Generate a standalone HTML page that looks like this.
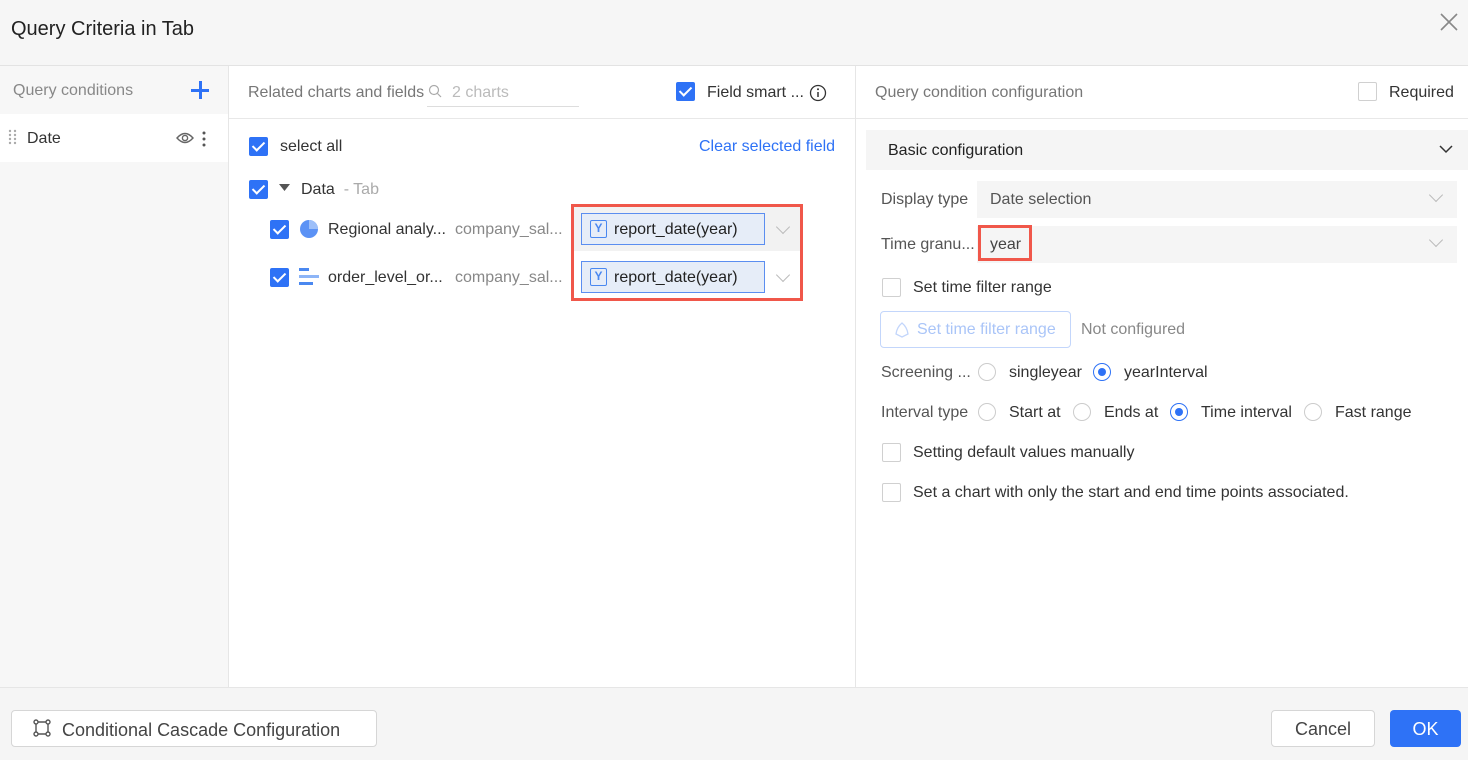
<!DOCTYPE html>
<html><head><meta charset="utf-8"><style>
*{box-sizing:border-box;margin:0;padding:0}
body{width:1468px;height:760px;position:relative;overflow:hidden;font-family:"Liberation Sans",sans-serif;font-size:16px;line-height:20px;color:#333;background:#fff}
.a{position:absolute;white-space:nowrap}
.cb{position:absolute;width:19px;height:19px;border-radius:2px;background:#2e72f6}
.cb::after{content:"";position:absolute;left:6px;top:2px;width:5px;height:10px;border:solid #fff;border-width:0 2px 2px 0;transform:rotate(45deg)}
.ub{position:absolute;width:19px;height:19px;border:1px solid #d0d0d0;border-radius:2px;background:#fff}
.rd{position:absolute;width:18px;height:18px;border:1px solid #ccc;border-radius:50%;background:#fff}
.rd.on{border-color:#2e72f6}
.rd.on::after{content:"";position:absolute;left:4px;top:4px;width:8px;height:8px;border-radius:50%;background:#2e72f6}
.g{color:#888}
.chev{position:absolute;width:10px;height:10px;border:solid #bbb;border-width:0 1px 1px 0;transform:rotate(45deg)}
.fld{position:absolute;left:581px;width:184px;height:32px;background:#e6edf8;border:1px solid #5b8ef0;padding-left:32px;line-height:31px;color:#222}
.fld .ic{position:absolute;left:8px;top:6px;width:17px;height:18px;border:1.5px solid #4a88f0;border-radius:2px;font-size:12px;line-height:14px;text-align:center;color:#4a88f0;font-weight:bold}
</style></head><body>
<div class="a" style="left:0;top:0;width:1468px;height:66px;background:#f6f6f6;border-bottom:1px solid #e3e3e3"></div>
<div class="a" style="left:11px;top:17px;font-size:20px;line-height:24px;color:#222">Query Criteria in Tab</div>
<svg class="a" style="left:1440px;top:13px" width="18" height="18"><path d="M1 1L17 17M17 1L1 17" stroke="#888" stroke-width="1.6"/></svg>
<!-- left panel -->
<div class="a" style="left:0;top:66px;width:229px;height:621px;background:#f7f7f7;border-right:1px solid #e6e6e6"></div>
<div class="a g" style="left:13px;top:81px">Query conditions</div>
<div class="a" style="left:191px;top:89px;width:18px;height:2.5px;background:#2e72f6"></div>
<div class="a" style="left:199px;top:81px;width:2.5px;height:18px;background:#2e72f6"></div>
<div class="a" style="left:0;top:114px;width:228px;height:48px;background:#fff"></div>
<svg class="a" style="left:8px;top:129px" width="10" height="18"><g fill="#aaa"><circle cx="2" cy="2" r="1.2"/><circle cx="7" cy="2" r="1.2"/><circle cx="2" cy="6" r="1.2"/><circle cx="7" cy="6" r="1.2"/><circle cx="2" cy="10" r="1.2"/><circle cx="7" cy="10" r="1.2"/><circle cx="2" cy="14" r="1.2"/><circle cx="7" cy="14" r="1.2"/></g></svg>
<div class="a" style="left:27px;top:129px">Date</div>
<svg class="a" style="left:176px;top:131px" width="18" height="14"><path d="M1 7Q9 -2 17 7Q9 16 1 7Z" fill="none" stroke="#666" stroke-width="1.4"/><circle cx="9" cy="7" r="2.6" fill="none" stroke="#666" stroke-width="1.4"/></svg>
<svg class="a" style="left:202px;top:131px" width="4" height="16"><g fill="#555"><circle cx="2" cy="2" r="1.5"/><circle cx="2" cy="8" r="1.5"/><circle cx="2" cy="14" r="1.5"/></g></svg>
<!-- middle -->
<div class="a" style="left:229px;top:118px;width:626px;height:1px;background:#e8e8e8"></div>
<div class="a" style="left:855px;top:66px;width:1px;height:621px;background:#e6e6e6"></div>
<div class="a g" style="left:248px;top:83px;color:#777">Related charts and fields</div>
<svg class="a" style="left:428px;top:84px" width="14" height="14"><circle cx="6" cy="6" r="4.5" fill="none" stroke="#aaa" stroke-width="1.2"/><path d="M9.5 9.5L13 13" stroke="#aaa" stroke-width="1.2"/></svg>
<div class="a" style="left:452px;top:83px;color:#bbb">2 charts</div>
<div class="a" style="left:427px;top:106px;width:152px;height:1px;background:#ddd"></div>
<div class="cb" style="left:676px;top:82px"></div>
<div class="a" style="left:707px;top:83px">Field smart ...</div>
<svg class="a" style="left:809px;top:84px" width="18" height="18"><circle cx="9" cy="9" r="7.5" fill="none" stroke="#333" stroke-width="1.3"/><circle cx="9" cy="5.3" r="1" fill="#333"/><path d="M9 8v5" stroke="#333" stroke-width="1.5"/></svg>
<div class="cb" style="left:249px;top:137px"></div>
<div class="a" style="left:280px;top:137px">select all</div>
<div class="a" style="left:699px;top:137px;color:#2e72f6">Clear selected field</div>
<div class="cb" style="left:249px;top:180px"></div>
<svg class="a" style="left:279px;top:184px" width="12" height="8"><path d="M0 0H11L5.5 7Z" fill="#555"/></svg>
<div class="a" style="left:301px;top:180px">Data <span style="color:#aaa">&nbsp;- Tab</span></div>
<div class="a" style="left:571px;top:204px;width:232px;height:97px;border:3px solid #f0574a"></div>
<div class="a" style="left:574px;top:207px;width:226px;height:44px;background:#f2f2f2"></div>
<div class="cb" style="left:270px;top:220px"></div>
<svg class="a" style="left:299px;top:219px" width="20" height="20"><circle cx="10" cy="10" r="9" fill="#5b92f5"/><path d="M10 1A9 9 0 0 1 19 10H10Z" fill="#9dbff9"/></svg>
<div class="a" style="left:328px;top:220px">Regional analy...</div>
<div class="a g" style="left:455px;top:220px">company_sal...</div>
<div class="fld" style="top:213px"><span class="ic">Y</span>report_date(year)</div>
<div class="chev" style="left:778px;top:222px"></div>
<div class="cb" style="left:270px;top:268px"></div>
<svg class="a" style="left:299px;top:268px" width="20" height="18"><rect x="0" y="0" width="10" height="3" fill="#4a88f0"/><rect x="0" y="7" width="20" height="3" fill="#8db5f7"/><rect x="0" y="14" width="14" height="3" fill="#4a88f0"/></svg>
<div class="a" style="left:328px;top:268px">order_level_or...</div>
<div class="a g" style="left:455px;top:268px">company_sal...</div>
<div class="fld" style="top:261px"><span class="ic">Y</span>report_date(year)</div>
<div class="chev" style="left:778px;top:270px"></div>
<!-- right -->
<div class="a" style="left:856px;top:118px;width:612px;height:1px;background:#e8e8e8"></div>
<div class="a" style="left:875px;top:83px;color:#777">Query condition configuration</div>
<div class="ub" style="left:1358px;top:82px"></div>
<div class="a" style="left:1389px;top:83px">Required</div>
<div class="a" style="left:866px;top:130px;width:602px;height:40px;background:#f5f5f5"></div>
<div class="a" style="left:888px;top:141px;color:#222">Basic configuration</div>
<svg class="a" style="left:1439px;top:145px" width="14" height="9"><path d="M1 1L7 7L13 1" fill="none" stroke="#333" stroke-width="1.5"/></svg>
<div class="a" style="left:881px;top:190px;color:#555">Display type</div>
<div class="a" style="left:977px;top:181px;width:480px;height:37px;background:#f5f5f5"></div>
<div class="a" style="left:990px;top:190px;color:#555">Date selection</div>
<div class="chev" style="left:1431px;top:190px"></div>
<div class="a" style="left:881px;top:235px;color:#555">Time granu...</div>
<div class="a" style="left:977px;top:226px;width:480px;height:37px;background:#f5f5f5"></div>
<div class="a" style="left:978px;top:225px;width:54px;height:36px;border:3px solid #f0574a"></div>
<div class="a" style="left:990px;top:235px;color:#444">year</div>
<div class="chev" style="left:1431px;top:235px"></div>
<div class="ub" style="left:882px;top:278px"></div>
<div class="a" style="left:913px;top:278px">Set time filter range</div>
<div class="a" style="left:880px;top:311px;width:191px;height:37px;border:1px solid #c3d6fb;border-radius:4px"></div>
<svg class="a" style="left:893px;top:321px" width="18" height="18"><path d="M9 2Q4 6 3 13L9 16L15 13Q14 6 9 2Z" fill="none" stroke="#c3d6fb" stroke-width="1.3"/></svg>
<div class="a" style="left:917px;top:320px;color:#aac5f8">Set time filter range</div>
<div class="a g" style="left:1081px;top:320px">Not configured</div>
<div class="a" style="left:881px;top:363px;color:#555">Screening ...</div>
<div class="rd" style="left:978px;top:363px"></div>
<div class="a" style="left:1009px;top:363px">singleyear</div>
<div class="rd on" style="left:1093px;top:363px"></div>
<div class="a" style="left:1124px;top:363px">yearInterval</div>
<div class="a" style="left:881px;top:403px;color:#555">Interval type</div>
<div class="rd" style="left:978px;top:403px"></div>
<div class="a" style="left:1009px;top:403px">Start at</div>
<div class="rd" style="left:1073px;top:403px"></div>
<div class="a" style="left:1104px;top:403px">Ends at</div>
<div class="rd on" style="left:1170px;top:403px"></div>
<div class="a" style="left:1201px;top:403px">Time interval</div>
<div class="rd" style="left:1304px;top:403px"></div>
<div class="a" style="left:1335px;top:403px">Fast range</div>
<div class="ub" style="left:882px;top:443px"></div>
<div class="a" style="left:913px;top:443px">Setting default values manually</div>
<div class="ub" style="left:882px;top:483px"></div>
<div class="a" style="left:913px;top:483px">Set a chart with only the start and end time points associated.</div>
<!-- footer -->
<div class="a" style="left:0;top:687px;width:1468px;height:73px;background:#f5f5f5;border-top:1px solid #e6e6e6"></div>
<div class="a" style="left:11px;top:710px;width:366px;height:37px;background:#fff;border:1px solid #d6d6d6;border-radius:4px"></div>
<svg class="a" style="left:33px;top:719px" width="18" height="18"><g fill="none" stroke="#555" stroke-width="1.4"><circle cx="3" cy="3" r="2"/><circle cx="15" cy="3" r="2"/><circle cx="3" cy="15" r="2"/><circle cx="15" cy="15" r="2"/><path d="M5 3H13M3 5V13M5 15H13M15 5V13"/></g></svg>
<div class="a" style="left:62px;top:719px;font-size:18px;line-height:22px;color:#444">Conditional Cascade Configuration</div>
<div class="a" style="left:1271px;top:710px;width:104px;height:37px;background:#fff;border:1px solid #d6d6d6;border-radius:4px;text-align:center;line-height:37px;font-size:18px;color:#444">Cancel</div>
<div class="a" style="left:1390px;top:710px;width:71px;height:37px;background:#2e72f6;border-radius:4px;text-align:center;line-height:38px;font-size:18px;color:#fff">OK</div>
</body></html>
